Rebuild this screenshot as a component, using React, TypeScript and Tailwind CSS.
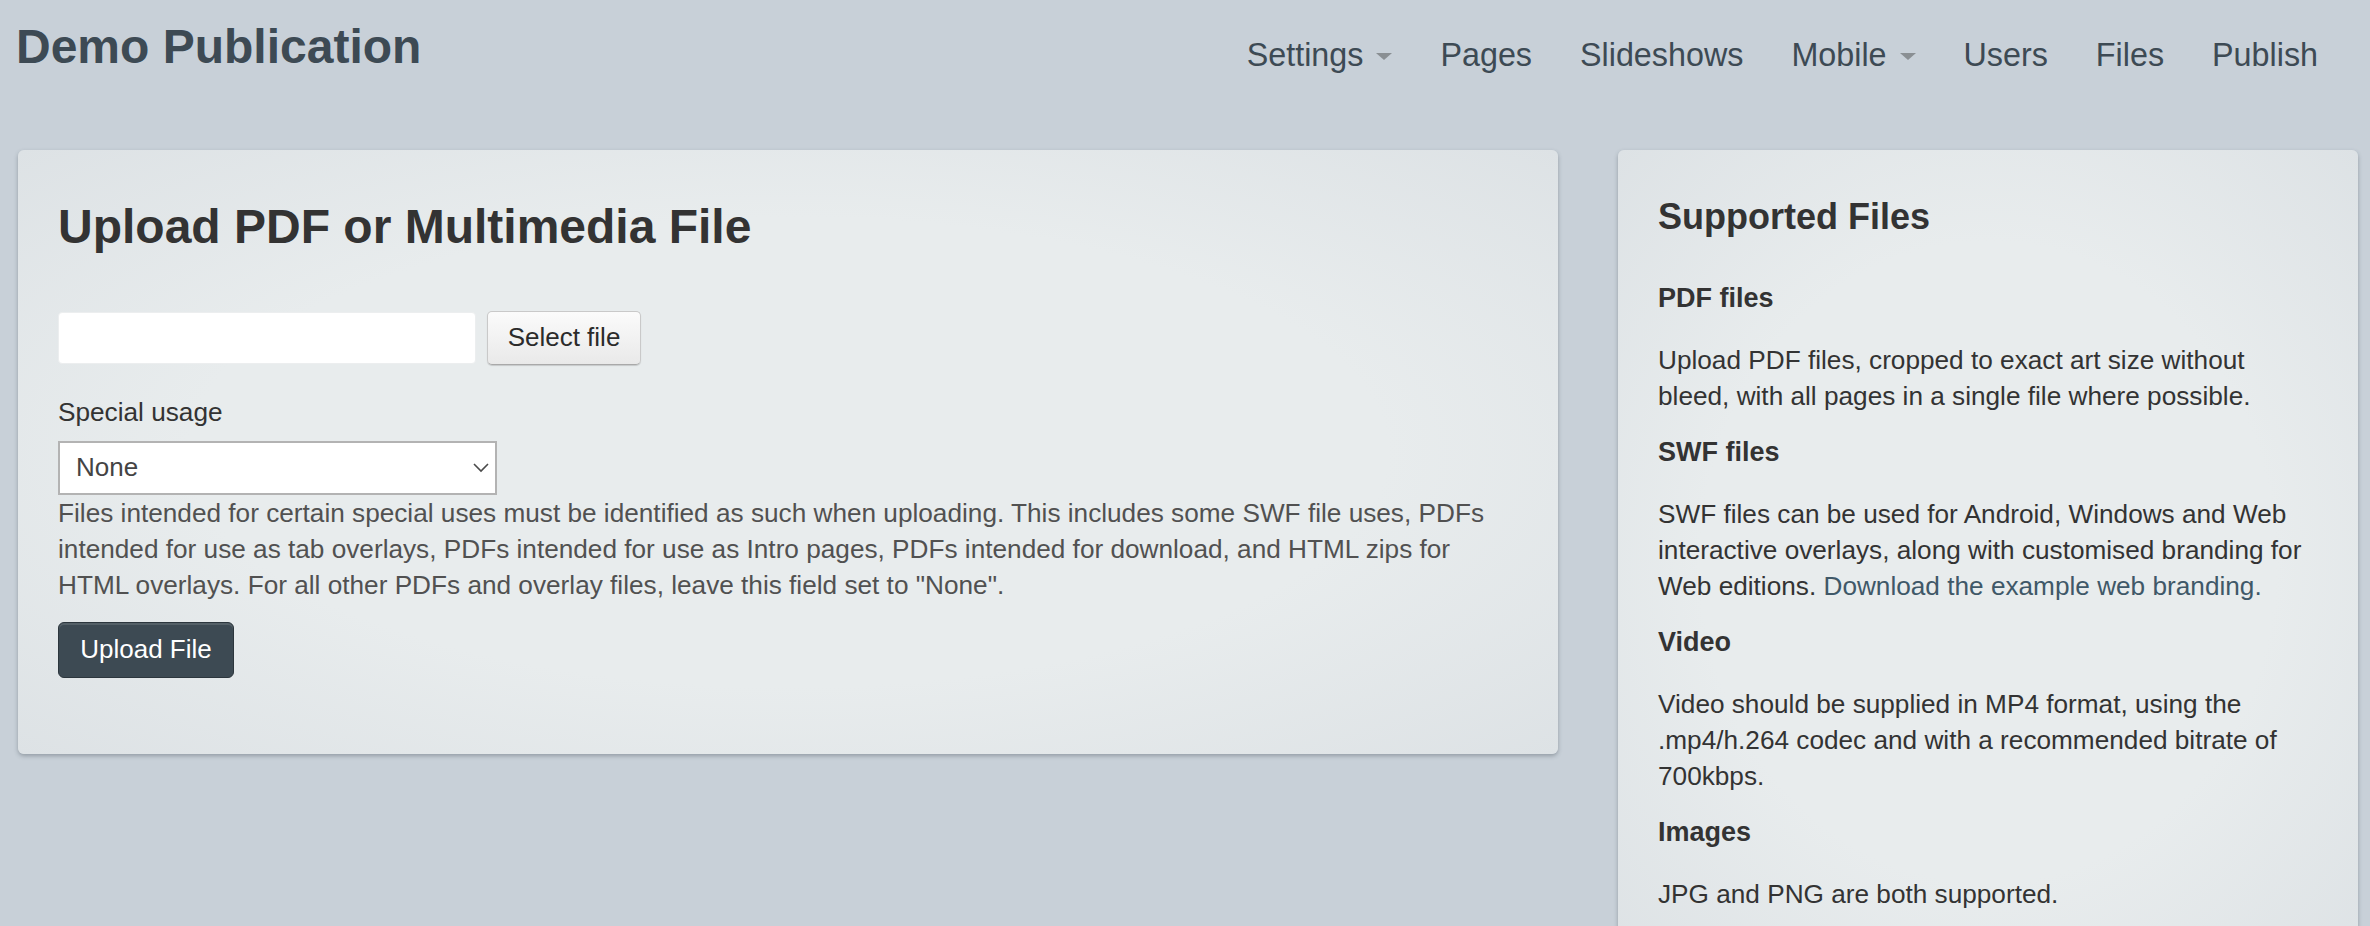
import { useState } from "react";

const navItems = [
  { label: "Settings", dropdown: true },
  { label: "Pages" },
  { label: "Slideshows" },
  { label: "Mobile", dropdown: true },
  { label: "Users" },
  { label: "Files" },
  { label: "Publish" },
];

const fileTypes = [
  {
    title: "PDF files",
    body: <>Upload PDF files, cropped to exact art size without bleed, with all pages in a single file where possible.</>,
  },
  {
    title: "SWF files",
    body: (
      <>
        SWF files can be used for Android, Windows and Web interactive overlays, along with customised branding for Web
        editions.{" "}
        <a href="#" className="text-[#3f5868]">
          Download the example web branding.
        </a>
      </>
    ),
  },
  {
    title: "Video",
    body: <>Video should be supplied in MP4 format, using the .mp4/h.264 codec and with a recommended bitrate of 700kbps.</>,
  },
  {
    title: "Images",
    body: <>JPG and PNG are both supported.</>,
  },
];

const card =
  "rounded-[6px] bg-[radial-gradient(ellipse_at_center,#e8eced_55%,#dde2e5_100%)] shadow-[0_2px_4px_rgba(50,60,70,0.35)]";

function Caret() {
  return (
    <svg width="16" height="7" viewBox="0 0 16 7" className="ml-[13px] mt-[2px]">
      <path d="M0 0h16L8 7z" fill="#8a8f93" />
    </svg>
  );
}

export default function App() {
  const [usage, setUsage] = useState("none");

  return (
    <div className="min-h-screen bg-[#c8d0d8] font-['Liberation_Sans',Arial,sans-serif] text-[#333]">
      <header className="flex h-[150px] items-start justify-between pl-[16px] pr-[28px]">
        <h1 className="mt-[18px] text-[48px] font-bold leading-[1.2] text-[#3d4a54]">Demo Publication</h1>
        <nav className="mt-[36px] flex items-center">
          {navItems.map((item) => (
            <a
              key={item.label}
              href="#"
              className="flex items-center px-[24px] text-[32.3px] leading-[1.2] text-[#3d4a54]"
            >
              {item.label}
              {item.dropdown && <Caret />}
            </a>
          ))}
        </nav>
      </header>

      <main className="flex items-start gap-[60px] pl-[18px]">
        {/* upload form */}
        <section className={`${card} w-[1540px] px-[40px] pt-[48px] pb-[76px]`}>
          <h2 className="mb-[55px] text-[48px] font-bold leading-[1.2]">Upload PDF or Multimedia File</h2>

          <div className="flex items-center gap-[11px]">
            <div className="h-[52px] w-[418px] rounded-[4px] border border-[#eceeef] bg-white" />
            <button className="h-[54px] w-[154px] rounded-[5px] border border-[#c9c9c9] border-b-[#a9a9a9] bg-[linear-gradient(#fbfbfb,#e9e9e9)] text-[26px] text-[#2b2b2b] shadow-[0_1px_1px_rgba(0,0,0,0.15)]">
              Select file
            </button>
          </div>

          <label className="mt-[29px] mb-[11px] block text-[26.2px] leading-[36px]">Special usage</label>
          <div className="relative w-[439px]">
            <select
              value={usage}
              onChange={(e) => setUsage(e.target.value)}
              className="h-[54px] w-full appearance-none rounded-none border-2 border-[#b3b3b3] bg-white pl-[16px] text-[26px] text-[#444] outline-none"
            >
              <option value="none">None</option>
              <option value="tab">Tab overlay</option>
              <option value="intro">Intro page</option>
              <option value="download">Download</option>
              <option value="html">HTML overlay</option>
            </select>
            <svg
              width="16"
              height="10"
              viewBox="0 0 16 10"
              className="pointer-events-none absolute right-[8px] top-[22px]"
            >
              <path d="M1 1l7 7 7-7" fill="none" stroke="#4a4a4a" strokeWidth="1.6" />
            </svg>
          </div>
          <p className="text-[26.2px] leading-[36px] text-[#515151]">
            Files intended for certain special uses must be identified as such when uploading. This includes some SWF file
            uses, PDFs intended for use as tab overlays, PDFs intended for use as Intro pages, PDFs intended for download, and
            HTML zips for HTML overlays. For all other PDFs and overlay files, leave this field set to "None".
          </p>

          <button className="mt-[19px] h-[56px] w-[176px] rounded-[6px] border border-[#2c363d] bg-[#3d4a53] text-[26px] text-white shadow-[inset_0_2px_0_rgba(255,255,255,0.12)]">
            Upload File
          </button>
        </section>

        {/* supported file types */}
        <aside className={`${card} w-[740px] px-[40px] pt-[45px] pb-[40px]`}>
          <h3 className="mb-[44px] text-[36px] font-bold leading-[1.2]">Supported Files</h3>
          {fileTypes.map((t) => (
            <div key={t.title}>
              <h4 className="mb-[28px] text-[27px] font-bold leading-[32px]">{t.title}</h4>
              <p className="mb-[22px] text-[26.2px] leading-[36px]">{t.body}</p>
            </div>
          ))}
        </aside>
      </main>
    </div>
  );
}
